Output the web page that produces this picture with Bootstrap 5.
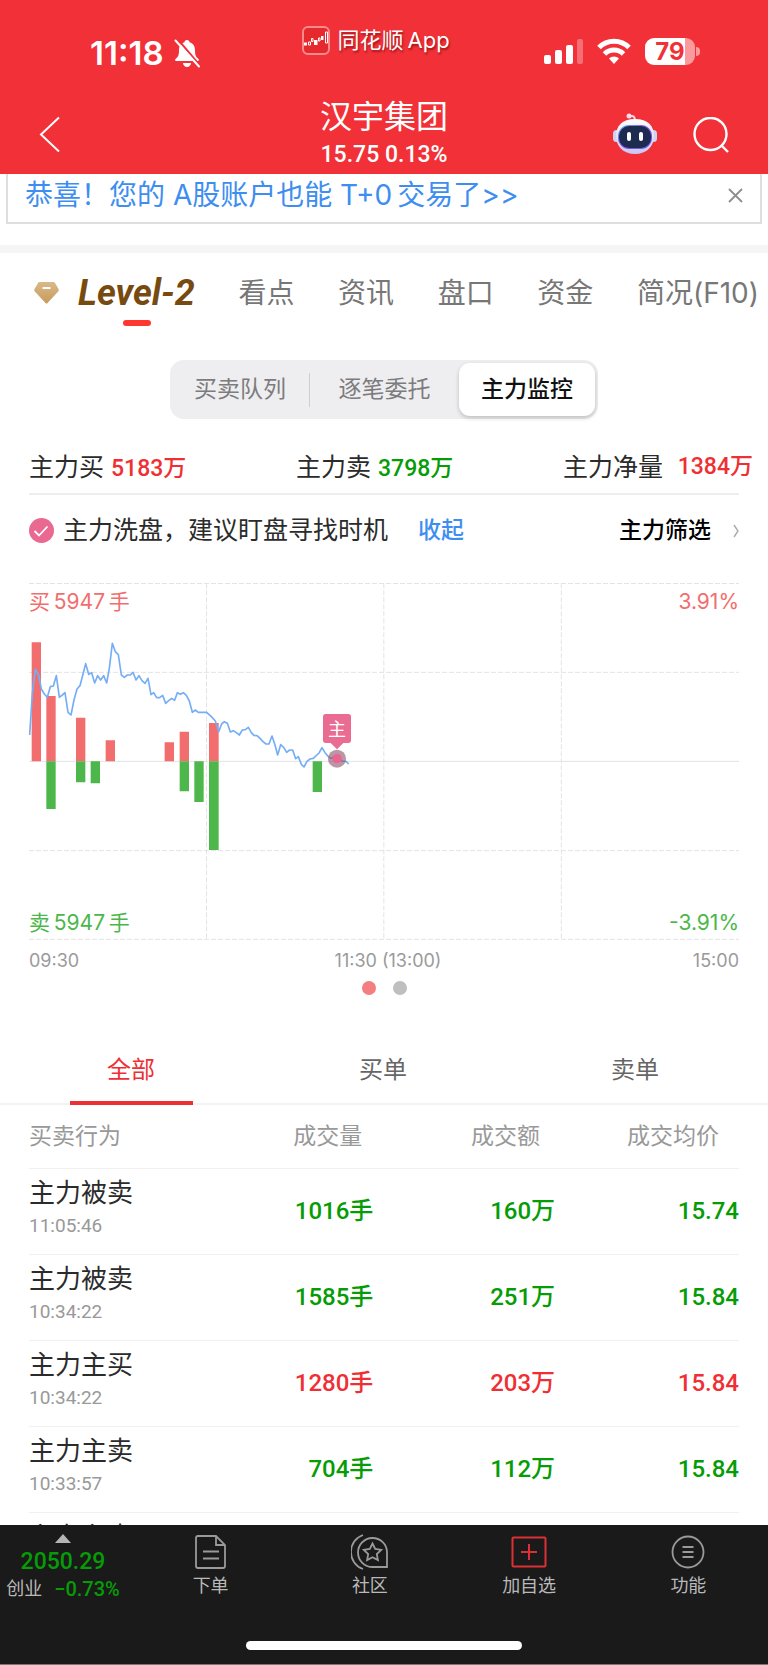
<!DOCTYPE html>
<html lang="zh-CN">
<head>
<meta charset="utf-8">
<meta name="viewport" content="width=device-width, initial-scale=1">
<title>汉宇集团</title>
<link href="https://cdn.jsdelivr.net/npm/bootstrap@5.3.0/dist/css/bootstrap.min.css" rel="stylesheet">
<style>
  :root { --up: #ef2f33; --down: #069c06; --link: #3d8ef0; --ink: #2b2b2b; }
  body { font-family: Inter, "Noto Sans CJK SC", sans-serif; color: var(--ink); background: #fff; }
  a { text-decoration: none; color: inherit; }
  button { border: 0; background: none; padding: 0; color: inherit; }
  svg { display: block; flex-shrink: 0; }
  .num { font-family: Roboto, "Noto Sans CJK SC", sans-serif; font-weight: 500; }
  .up { color: var(--up); }
  .down { color: var(--down); }
  .blue { color: var(--link); }

  .app-head { background: #f23037; color: #fff; height: 174px; }
  .side { flex: 1 1 0; }
  .status { height: 100px; }
  .status-left { width: 39%; padding: 36px 0 0 90px; }
  .status-mid { padding: 26px 0 0 2px; }
  .status-right { padding: 38px 68px 0 0; }
  .bell { margin: 2px 0 0 10px; }
  .wifi { margin: 0 14px 0 13px; }
  .clock { font-size: 33px; line-height: 34px; font-weight: 600; }
  .app-name { font-size: 22px; line-height: 28px; text-shadow: 1px 2px 2px rgba(90, 0, 0, .55); }
  .batt { width: 50px; height: 27px; border-radius: 9px; background: linear-gradient(90deg, #fff 80%, #fa9a9d 80%); color: #f23037; font-size: 24px; line-height: 27px; font-weight: 700; }
  .nub { width: 4px; height: 9px; border-radius: 0 4px 4px 0; background: #fa9a9d; margin: 9px 0 0 1px; }
  .head-left { padding: 16px 0 0 39px; }
  .head-right { padding: 13px 39px 0 0; gap: 36px; }
  .title { font-size: 32px; line-height: 34px; font-weight: 400; }
  .quote { font-size: 23px; line-height: 28px; margin-top: 7px; }

  .scroller { overflow: auto; min-height: 0; scrollbar-width: none; }
  .scroller::-webkit-scrollbar { display: none; }
  .promo { margin: 0 6px; height: 50px; border: 2px solid #dedede; border-top: 0; padding: 0 17px 6px; }
  .promo a { font-size: 28px; line-height: 34px; }
  .band { height: 8px; margin-top: 21px; background: #f5f5f5; }

  .sections { padding: 21px 9px 0 34px; font-size: 28px; line-height: 38px; color: #777; white-space: nowrap; }
  .level { font-family: Roboto, sans-serif; font-size: 36px; font-style: italic; font-weight: 700; color: #774a10; margin-left: 19px; }
  .level-bar { width: 28px; height: 6px; border-radius: 3px; background: #ff382f; margin: 8px 0 0 123px; }

  .segments { width: 428px; height: 59px; margin: 34px auto 0; padding: 3px 3px 3px 1px; border-radius: 14px; background: #eeeef0; font-size: 23px; color: #7c7c7e; }
  .segments button { flex: 1 1 0; height: 53px; }
  .segments .first { flex: 0 0 138px; }
  .segments .rule { width: 1px; height: 34px; background: #cfcfd2; }
  .segments .on { flex: 0 0 136px; border-radius: 11px; background: #fff; color: #111; font-weight: 500; box-shadow: 0 2px 4px rgba(0, 0, 0, .2); }

  .gutter { margin-left: 29px; margin-right: 29px; }
  .totals { margin-left: 29px; margin-right: 15px; padding-top: 29px; height: 74px; font-size: 25px; line-height: 38px; white-space: nowrap; }
  .totals > div { width: 267px; }
  .totals .num { font-size: 23px; }
  .totals .last { width: auto; }
  .tip { border-top: 2px solid #eee; height: 73px; font-size: 25px; }
  .tip-text { margin-left: 9px; }
  .tip .act { font-size: 23px; font-weight: 500; }
  .tip .pick { margin-left: 155px; gap: 22px; }

  .chart-wrap { margin-top: 17px; }
  .chart svg.plot { width: 100%; height: auto; }
  .tag { position: absolute; font-size: 21px; line-height: 26px; }
  .tag-up { color: #f26d6e; top: 6px; }
  .tag-down { color: #4bb74b; bottom: 4px; }
  .axis { font-size: 18px; line-height: 20px; margin-top: 11px; color: #9a9a9a; }
  .axis > span { flex: 1 1 0; }
  .pager { gap: 17px; margin-top: 10px; }
  .pager i { width: 14px; height: 14px; border-radius: 50%; background: #bfbfbf; }
  .pager .on { background: #f37f80; }

  .filters { margin-top: 40px; height: 70px; padding: 0 7px 0 5px; border-bottom: 2px solid #f3f3f3; font-size: 24px; color: #666; }
  .filters button { flex: 1 1 0; height: 70px; }
  .filters .on { color: var(--up); position: relative; }
  .filters .on::after { content: ""; position: absolute; left: 65px; right: 64px; bottom: 0; height: 4px; background: #ec3033; }

  .deals { width: calc(100% - 58px); table-layout: fixed; }
  .deals th, .deals td { padding: 0; border-bottom: 1px solid #f1f1f1; text-align: right; }
  .deals th { height: 63px; font-size: 23px; font-weight: 400; color: #999; }
  .deals td:first-child { text-align: left; vertical-align: top; }
  .deals th:first-child { text-align: left; }
  .deals .vol { padding-right: 11px; }
  .deals .amt { padding-right: 15px; }
  .deals .avg { padding-right: 20px; }
  .deals td { height: 86px; font-size: 24px; line-height: 32px; }
  .deals .act-name { font-size: 26px; line-height: 34px; padding-top: 7px; }
  .deals .time { font-family: Roboto, sans-serif; font-size: 19px; line-height: 32px; color: #999; }

  .dock { background: #1a1a1a; color: #b9b9b9; height: 140px; border-bottom: 1px solid #777; font-size: 18px; line-height: 24px; }
  .dock-items { height: 116px; }
  .dock-items > a { flex: 1 1 0; padding-top: 9px; }
  .dock-items .index { flex: 0 0 131px; padding-right: 5px; }
  .index .value { font-size: 23px; line-height: 30px; margin-top: 4px; }
  .index .change { font-size: 20px; }
  .home { width: 36%; height: 9px; border-radius: 5px; background: #fff; }
</style>
</head>
<body class="vh-100 d-flex flex-column overflow-hidden">

<header class="app-head flex-shrink-0">
  <div class="status d-flex">
    <div class="status-left flex-shrink-0 d-flex align-items-start">
      <span class="clock">11:18</span>
      <svg class="bell" width="26" height="30" viewBox="0 0 26 30">
        <path d="M13 2c1.500 0 2.500 1 2.500 2.200 4 1 5.500 4.300 5.500 8.300 0 5 1 6.500 3.500 8.500.8.700.5 2-.7 2H2.200c-1.200 0-1.500-1.300-.7-2C4 19 5 17.500 5 12.500c0-4 1.500-7.300 5.500-8.300C10.500 3 11.500 2 13 2z" fill="#fff"/>
        <path d="M9 25h8c0 2.200-1.800 4-4 4s-4-1.800-4-4z" fill="#fff"/>
        <path d="M3.500 1 26 27.500" stroke="#f23037" stroke-width="2"/>
        <path d="M1.500 2.500 25 28.500" stroke="#fff" stroke-width="2" stroke-linecap="round"/>
      </svg>
    </div>
    <div class="status-mid d-flex align-items-start">
      <svg class="me-2" width="28" height="29" viewBox="0 0 28 29">
        <rect x="1" y="1" width="26" height="27" rx="5" fill="#e5292d" stroke="#f98a8d" stroke-width="2"/>
        <path d="M2 16.500h3v3H2zM12 14h3.500v5H12zM19 10h2.500v4H19z" fill="#fff"/>
        <path d="M6.500 16h2v3h-2zM9.500 12.500h1.500v3H9.500zM16.500 12h1.500v3h-1.500zM23.500 6h2v11h-2z" fill="none" stroke="#fff"/>
      </svg>
      <span class="app-name">同花顺&#8201;App</span>
    </div>
    <div class="status-right flex-grow-1 d-flex justify-content-end align-items-start">
      <svg width="40" height="27" viewBox="0 0 40 27" fill="#fff">
        <rect x="0" y="17" width="7" height="9" rx="2"/><rect x="11" y="12" width="7" height="14" rx="2"/>
        <rect x="22" y="7" width="7" height="19" rx="2"/><rect x="33" y="1" width="6" height="25" rx="2" opacity=".3"/>
      </svg>
      <svg class="wifi" width="34" height="27" viewBox="0 0 34 27" fill="none" stroke="#fff" stroke-width="5">
        <path d="M2 9.500a21 21 0 0 1 30 0M7.500 16a13.500 13.500 0 0 1 19 0"/>
        <path d="M17 26l-5-5.500a7 7 0 0 1 10 0z" fill="#fff" stroke="none"/>
      </svg>
      <span class="batt text-center">79</span>
      <span class="nub"></span>
    </div>
  </div>
  <div class="d-flex">
    <div class="side head-left">
      <button type="button" aria-label="返回"><svg width="22" height="37" viewBox="0 0 22 37" fill="none" stroke="#fff" stroke-width="2"><path d="M20 1.500 2 18.500l18 17"/></svg></button>
    </div>
    <div class="text-center">
      <h1 class="title m-0">汉宇集团</h1>
      <div class="quote num">15.75 0.13%</div>
    </div>
    <div class="side head-right d-flex justify-content-end align-items-start">
      <button type="button" aria-label="智能助手">
        <svg width="44" height="42" viewBox="0 0 44 42">
          <defs>
            <linearGradient id="shell" x2="0" y2="1"><stop stop-color="#fff"/><stop offset="1" stop-color="#c9c5f3"/></linearGradient>
            <linearGradient id="rim" x2="1" y2="1"><stop stop-color="#56bde8"/><stop offset=".5" stop-color="#8c4be0"/><stop offset="1" stop-color="#5a62e8"/></linearGradient>
          </defs>
          <path d="M16 3.500c4-1.500 6 0 6 4" fill="none" stroke="#f4dcec" stroke-width="2"/><circle cx="16" cy="3" r="2.500" fill="#f4dcec"/>
          <rect x="0" y="17" width="7" height="12" rx="3.500" fill="#cfd3f2"/><rect x="37" y="17" width="7" height="12" rx="3.500" fill="#cfd3f2"/>
          <path d="M22 6c13 0 19 7 19 17S34 41 22 41 3 33 3 23 9 6 22 6z" fill="url(#shell)"/>
          <rect x="5" y="12" width="34" height="24" rx="11" fill="url(#rim)"/>
          <rect x="6" y="13" width="32" height="22" rx="10" fill="#1d2b50"/>
          <rect x="14" y="19" width="4" height="9" rx="2" fill="#fff"/><rect x="26" y="19" width="4" height="9" rx="2" fill="#fff"/>
        </svg>
      </button>
      <button type="button" aria-label="搜索" class="mt-1"><svg width="36" height="36" viewBox="0 0 36 36" fill="none" stroke="#fff" stroke-width="2.400"><circle cx="17.500" cy="17" r="16"/><path d="m28 28 7 7"/></svg></button>
    </div>
  </div>
</header>

<main class="scroller flex-grow-1">
  <div class="promo d-flex justify-content-between align-items-center">
    <a href="#" class="blue">恭喜！您的 A股账户也能 T+0&#8201;交易了&gt;&gt;</a>
    <button type="button" aria-label="关闭"><svg width="15" height="15" viewBox="0 0 15 15" stroke="#8e8e8e" stroke-width="1.800"><path d="m1 1 13 13M14 1 1 14"/></svg></button>
  </div>
  <div class="band"></div>

  <nav class="sections d-flex justify-content-between align-items-center">
    <a href="#" class="d-flex align-items-center">
      <svg width="25" height="22" viewBox="0 0 25 22"><defs><linearGradient id="gem" x2="0" y2="1"><stop stop-color="#d9b98a"/><stop offset="1" stop-color="#c79a5c"/></linearGradient></defs><path d="M6 0h13c1 0 1.500.3 2 1l3.500 6c.5 1 .4 1.800-.3 2.600L13.500 21c-.6.700-1.400.7-2 0L.8 9.600C.1 8.800 0 8 .5 7L4 1c.5-.7 1-1 2-1z" fill="url(#gem)"/><path d="M8.500 6h8" stroke="#fff" stroke-width="2"/></svg>
      <span class="level">Level-2</span>
    </a>
    <a href="#">看点</a><a href="#">资讯</a><a href="#">盘口</a><a href="#">资金</a><a href="#">简况(F10)</a>
  </nav>
  <div class="d-flex"><div class="level-bar"></div></div>

  <div class="segments d-flex align-items-center">
    <button type="button" class="first">买卖队列</button><span class="rule"></span>
    <button type="button">逐笔委托</button>
    <button type="button" class="on">主力监控</button>
  </div>

  <div class="totals d-flex">
    <div>主力买 <span class="num up">5183万</span></div>
    <div>主力卖 <span class="num down">3798万</span></div>
    <div class="last flex-grow-1 d-flex justify-content-between"><span>主力净量</span> <span class="num up">1384万</span></div>
  </div>

  <div class="tip gutter d-flex align-items-center">
    <svg width="25" height="25" viewBox="0 0 25 25"><circle cx="12.500" cy="12.500" r="12.500" fill="#ea6991"/><path d="m5.500 13 4.500 4.500 8.500-9" fill="none" stroke="#fff" stroke-width="1.800"/></svg>
    <span class="tip-text">主力洗盘，建议盯盘寻找时机</span>
    <button type="button" class="act blue ms-auto">收起</button>
    <a href="#" class="act pick text-black d-flex align-items-center">主力筛选
      <svg width="6" height="14" viewBox="0 0 6 14" fill="none" stroke="#aaa" stroke-width="1.400"><path d="m1 1 4 6-4 6"/></svg></a>
  </div>

  <div class="chart-wrap gutter">
    <div class="chart position-relative">
      <svg class="plot" viewBox="87 69 2130 1071" role="img" aria-label="主力监控分时图">
        <g stroke="#e3e3e3" stroke-width="3" fill="none">
          <path stroke-dasharray="15 6" d="M87 70.500H2217M87 337H2217M87 872H2217M87 1138H2217M619.500 70V1138M1151.500 70V1138M1684 70V1138"/>
          <path d="M87 604H2217"/>
        </g>
        <path fill="#f26d6e" d="M95 247h28V604h-28zM139 408h28V604h-28zM228 473h28V604h-28zM317 541h28V604h-28zM494 547h28V604h-28zM539 515h28V604h-28zM627 489h29V604h-29z"/>
        <path fill="#4db74c" d="M139 604h28V747h-28zM228 604h28V667h-28zM272 604h28V670h-28zM539 604h28V694h-28zM583 604h28V726h-28zM627 604h29V870h-29zM938 604h28V696h-28z"/>
        <polyline fill="none" stroke="#76aef5" stroke-width="5" stroke-linejoin="round" points="89,525 97,400 106,328 116,345 124,387 133,402 142,412 151,380 160,378 169,347 178,412 187,405 195,398 204,457 213,465 222,420 231,387 240,377 249,343 257,311 266,343 275,338 284,369 293,347 302,360 311,347 320,369 328,325 337,250 346,275 355,284 364,345 373,352 382,345 391,345 399,337 408,360 417,347 426,362 435,370 444,355 453,404 461,398 470,413 479,413 488,406 497,430 506,422 515,415 524,421 532,398 541,403 550,398 559,406 568,423 577,457 586,450 595,457 620,457 634,470 646,483 656,515 665,492 673,485 682,490 691,516 700,512 709,518 718,525 727,510 736,509 745,502 754,518 762,526 771,527 780,535 789,545 798,552 807,552 816,528 825,555 833,585 842,554 851,562 860,577 869,570 878,570 887,596 895,590 904,613 912,621 921,604 930,597 940,595 957,579 966,563 975,578 984,589 993,595 1010,588 1025,603 1038,604 1046,612"/>
        <circle cx="1011" cy="596" r="27" fill="#8c5268" fill-opacity=".6"/><circle cx="1011" cy="596" r="14" fill="#ec6492"/>
        <path fill="#ea6c93" d="M977 462h68q8 0 8 8v71q0 8-8 8h-15l-19 19-19-19h-15q-8 0-8-8v-71q0-8 8-8z"/>
        <text x="1011" y="528" font-size="54" fill="#fff" text-anchor="middle">主</text>
      </svg>
      <span class="tag tag-up start-0">买&#8201;5947&#8201;手</span><span class="tag tag-up end-0">3.91%</span>
      <span class="tag tag-down start-0">卖&#8201;5947&#8201;手</span><span class="tag tag-down end-0">-3.91%</span>
    </div>
    <div class="axis d-flex"><span>09:30</span><div class="ms-2">11:30 (13:00)</div><span class="text-end">15:00</span></div>
  </div>
  <div class="pager d-flex justify-content-center"><i class="on"></i><i></i></div>

  <div class="filters d-flex">
    <button type="button" class="on">全部</button><button type="button">买单</button><button type="button">卖单</button>
  </div>

  <table class="deals gutter">
    <colgroup><col style="width:25%"><col style="width:23.500%"><col style="width:25.600%"><col></colgroup>
    <thead><tr><th>买卖行为</th><th class="vol">成交量</th><th class="amt">成交额</th><th class="avg">成交均价</th></tr></thead>
    <tbody>
      <tr><td><div class="act-name">主力被卖</div><div class="time">11:05:46</div></td><td class="num down">1016手</td><td class="num down">160万</td><td class="num down">15.74</td></tr>
      <tr><td><div class="act-name">主力被卖</div><div class="time">10:34:22</div></td><td class="num down">1585手</td><td class="num down">251万</td><td class="num down">15.84</td></tr>
      <tr><td><div class="act-name">主力主买</div><div class="time">10:34:22</div></td><td class="num up">1280手</td><td class="num up">203万</td><td class="num up">15.84</td></tr>
      <tr><td><div class="act-name">主力主卖</div><div class="time">10:33:57</div></td><td class="num down">704手</td><td class="num down">112万</td><td class="num down">15.84</td></tr>
      <tr><td><div class="act-name">主力主卖</div></td><td></td><td></td><td></td></tr>
    </tbody>
  </table>
</main>

<footer class="dock flex-shrink-0">
  <nav class="dock-items d-flex text-center">
    <a href="#" class="index">
      <svg class="mx-auto" width="16" height="9" viewBox="0 0 16 9"><path d="M8 0l8 9H0z" fill="#b5b5b5"/></svg>
      <div class="value num down">2050.29</div>
      <div class="d-flex justify-content-center align-items-center"><span>创业</span><span class="change num down ms-2 ps-1">−0.73%</span></div>
    </a>
    <a href="#"><svg class="mx-auto mb-1" width="32" height="36" viewBox="0 0 32 36" fill="none" stroke="#9a9a9a" stroke-width="1.800"><path d="M3 2h18l9 9v21q0 2-2 2H3q-2 0-2-2V4q0-2 2-2zM21 2v9h9M8 17.500h16M8 24.500h16"/></svg>下单</a>
    <a href="#"><svg class="mx-auto mb-1" width="38" height="36" viewBox="0 0 38 36" fill="none" stroke="#9a9a9a" stroke-width="1.800"><path d="M36 33V18A14.500 14.500 0 1 0 21.500 33zM12 1A18 18 0 0 0 12 35"/><path d="m21.500 9.500 2.700 5.500 6 .9-4.400 4.200 1.100 6-5.400-2.900-5.400 2.900 1.100-6-4.400-4.200 6-.9z"/></svg>社区</a>
    <a href="#"><svg class="mx-auto mb-1" width="36" height="36" viewBox="0 0 36 36" fill="none" stroke="#dc3035" stroke-width="2"><rect x="1.500" y="3.500" width="33" height="29" rx="1"/><path d="M18 10v16M10 18h16"/></svg>加自选</a>
    <a href="#"><svg class="mx-auto mb-1" width="34" height="36" viewBox="0 0 34 36" fill="none" stroke="#9a9a9a" stroke-width="1.800"><circle cx="17" cy="18" r="15.500"/><path d="M11.500 13h11M11.500 18h11M11.500 23h11"/></svg>功能</a>
  </nav>
  <div class="home mx-auto"></div>
</footer>

<script src="https://cdn.jsdelivr.net/npm/bootstrap@5.3.0/dist/js/bootstrap.bundle.min.js"></script>
</body>
</html>
